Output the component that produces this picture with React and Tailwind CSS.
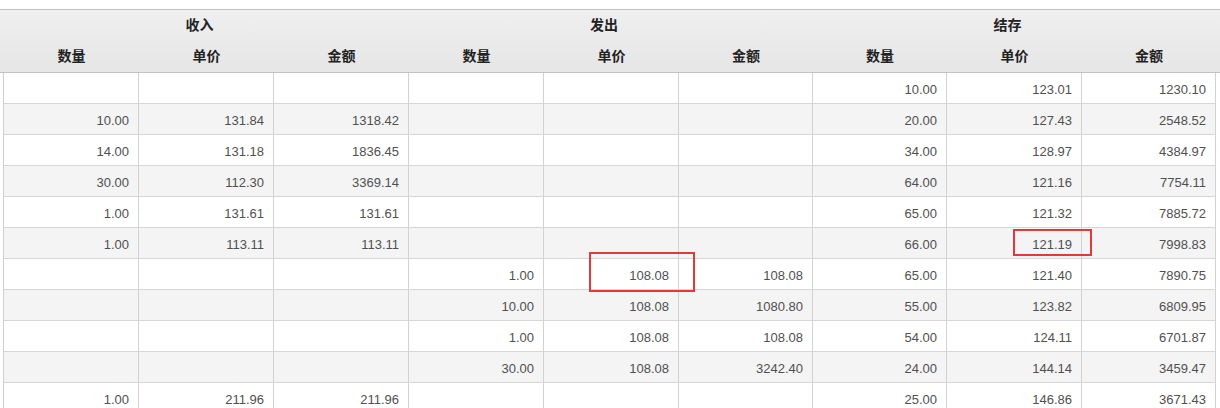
const groups = ['收入', '发出', '结存']
const subs = ['数量', '单价', '金额']

const rows = [
  ['', '', '', '', '', '', '10.00', '123.01', '1230.10'],
  ['10.00', '131.84', '1318.42', '', '', '', '20.00', '127.43', '2548.52'],
  ['14.00', '131.18', '1836.45', '', '', '', '34.00', '128.97', '4384.97'],
  ['30.00', '112.30', '3369.14', '', '', '', '64.00', '121.16', '7754.11'],
  ['1.00', '131.61', '131.61', '', '', '', '65.00', '121.32', '7885.72'],
  ['1.00', '113.11', '113.11', '', '', '', '66.00', '121.19', '7998.83'],
  ['', '', '', '1.00', '108.08', '108.08', '65.00', '121.40', '7890.75'],
  ['', '', '', '10.00', '108.08', '1080.80', '55.00', '123.82', '6809.95'],
  ['', '', '', '1.00', '108.08', '108.08', '54.00', '124.11', '6701.87'],
  ['', '', '', '30.00', '108.08', '3242.40', '24.00', '144.14', '3459.47'],
  ['1.00', '211.96', '211.96', '', '', '', '25.00', '146.86', '3671.43'],
]

const cols = 'grid grid-cols-[135px_135px_135px_135px_135px_134px_134px_135px_134px]'

export default function App() {
  return (
    <div className="relative w-[1220px] h-[408px] overflow-hidden bg-white pt-[9px] font-['Liberation_Sans','Noto_Sans_CJK_SC',sans-serif]">
      {/* header */}
      <div className="border-t border-b border-[#c2c2c2] bg-gradient-to-b from-[#efefef] to-[#e6e6e6] text-[14px] font-semibold text-[#222]">
        <div className="ml-[4px] grid grid-cols-[405px_404px_403px] h-[31px]">
          {groups.map((g) => (
            <div key={g} className="flex items-center justify-center pr-[14px]">{g}</div>
          ))}
        </div>
        <div className={`ml-[4px] h-[31px] ${cols}`}>
          {groups.flatMap((g) => subs.map((s) => (
            <div key={g + s} className="flex items-center justify-center">{s}</div>
          )))}
        </div>
      </div>

      {/* body */}
      <div className="ml-[3px] w-[1213px] border-l border-[#cfcfcf] text-[13px] text-[#505050]">
        {rows.map((r, i) => (
          <div key={i} className={`h-[31px] border-b border-[#d6d6d6] ${cols} ${i % 2 ? 'bg-[#f4f4f4]' : 'bg-white'}`}>
            {r.map((v, j) => (
              <div key={j} className="flex items-center justify-end pr-[9px] pt-[3px] border-r border-[#d2d2d2]">{v}</div>
            ))}
          </div>
        ))}
      </div>

      {/* highlight boxes */}
      <div className="absolute left-[589px] top-[252px] w-[106px] h-[40px] border-2 border-[#e23a3a]" />
      <div className="absolute left-[1013px] top-[229px] w-[79px] h-[27px] border-2 border-[#e23a3a]" />
    </div>
  )
}
